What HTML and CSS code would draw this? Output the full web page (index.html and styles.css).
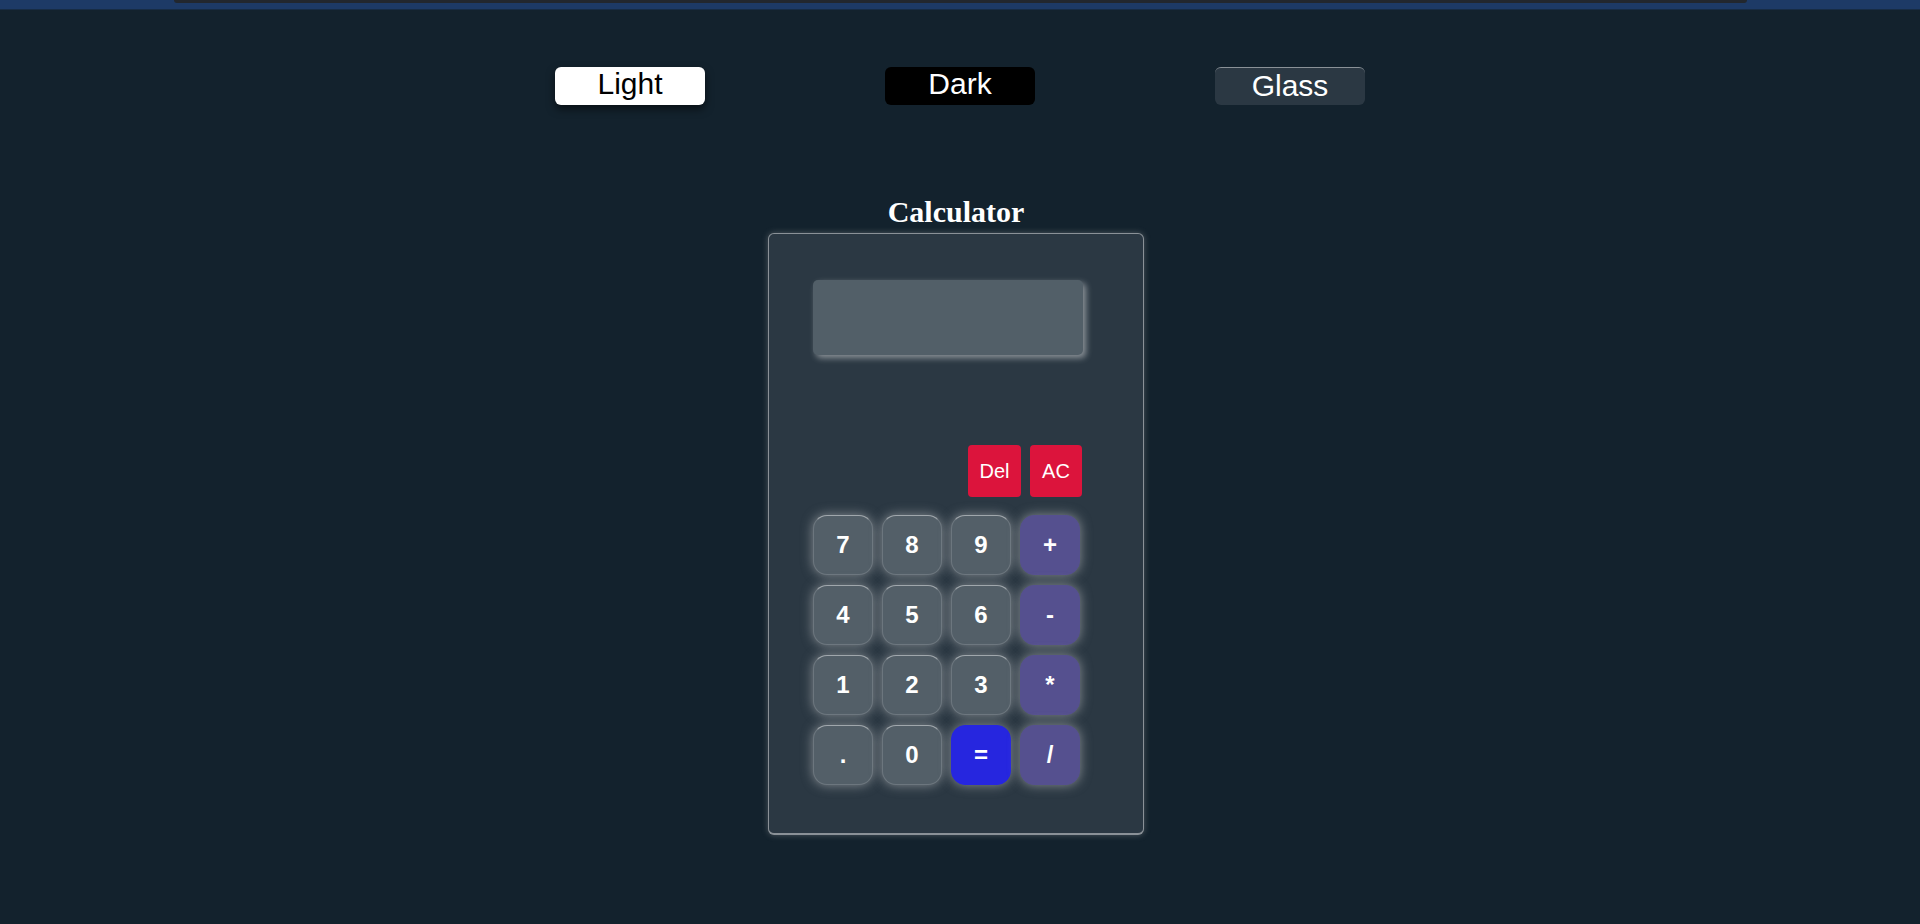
FILE: index.html
```html
<!DOCTYPE html>
<html lang="en">
<head>
<meta charset="utf-8">
<title>Calculator</title>
<link rel="stylesheet" href="styles.css">
</head>
<body>
<div class="topband"><div class="topbar"></div></div>
<div class="themes">
  <button class="theme theme-light">Light</button>
  <button class="theme theme-dark">Dark</button>
  <button class="theme theme-glass">Glass</button>
</div>
<main class="app">
  <h2 class="title">Calculator</h2>
  <div class="calc">
    <div class="display"></div>
    <div class="controls">
      <button class="ctrl">Del</button>
      <button class="ctrl">AC</button>
    </div>
    <div class="keys">
      <button class="key">7</button>
      <button class="key">8</button>
      <button class="key">9</button>
      <button class="key op">+</button>
      <button class="key">4</button>
      <button class="key">5</button>
      <button class="key">6</button>
      <button class="key op">-</button>
      <button class="key">1</button>
      <button class="key">2</button>
      <button class="key">3</button>
      <button class="key op">*</button>
      <button class="key">.</button>
      <button class="key">0</button>
      <button class="key eq">=</button>
      <button class="key op">/</button>
    </div>
  </div>
</main>
</body>
</html>
```
FILE: styles.css
```css
html, body {
  margin: 0;
  padding: 0;
  background: #13222d;
  height: 100%;
}
body {
  font-family: "Liberation Sans", Arial, sans-serif;
  overflow: hidden;
}
.topband {
  height: 9px;
  background: #1d3a66;
  border-bottom: 1px solid #172c45;
  padding: 0 173px 0 174px;
}
.topbar {
  height: 3px;
  background: #22272e;
  border-radius: 0 0 6px 6px;
}
.themes {
  display: flex;
  justify-content: center;
  gap: 180px;
  margin-top: 57px;
}
.theme {
  box-sizing: border-box;
  width: 150px;
  height: 38px;
  border: none;
  border-radius: 6px;
  font-family: "Liberation Sans", Arial, sans-serif;
  font-size: 30px;
  line-height: 34px;
  padding: 0 0 4px;
  cursor: pointer;
}
.theme-light {
  background: #ffffff;
  color: #000;
  box-shadow: 0 4px 8px rgba(0, 0, 0, 0.55);
}
.theme-dark {
  background: #000;
  color: #fff;
}
.theme-glass {
  background: #2b3843;
  color: #fff;
  border-top: 1px solid rgba(255, 255, 255, 0.45);
  padding: 0 0 2px;
}
.app {
  padding-right: 8px;
}
.title {
  margin: 90px 0 4px;
  text-align: center;
  font-family: "Liberation Serif", "Times New Roman", serif;
  font-size: 30px;
  line-height: 34px;
  font-weight: bold;
  color: #fff;
}
.calc {
  box-sizing: border-box;
  width: 376px;
  height: 602px;
  margin: 0 auto;
  background: #2b3843;
  border: 1px solid rgba(255, 255, 255, 0.45);
  border-bottom-width: 2px;
  border-radius: 6px;
  box-shadow: 0 0 6px rgba(190, 190, 190, 0.35);
  padding: 46px 0 0 44px;
}
.display {
  width: 270px;
  height: 75px;
  background: #525f68;
  border-radius: 5px;
  box-shadow: 3px 3px 6px rgba(255, 255, 255, 0.45);
}
.controls {
  display: flex;
  justify-content: flex-end;
  gap: 9px;
  width: 269px;
  margin-top: 90px;
}
.ctrl {
  width: 53px;
  height: 52px;
  border: none;
  border-radius: 4px;
  background: #dc143c;
  color: #fff;
  font-family: "Liberation Sans", Arial, sans-serif;
  font-size: 20px;
  padding: 0;
}
.ctrl + .ctrl {
  width: 52px;
}
.keys {
  display: grid;
  grid-template-columns: repeat(4, 60px);
  grid-auto-rows: 60px;
  column-gap: 9px;
  row-gap: 10px;
  margin-top: 18px;
}
.key {
  box-sizing: border-box;
  border: 1px solid rgba(255, 255, 255, 0.15);
  border-top-color: rgba(255, 255, 255, 0.45);
  border-radius: 14px;
  background: #535f68;
  color: #fff;
  font-family: "Liberation Sans", Arial, sans-serif;
  font-weight: bold;
  font-size: 24px;
  padding: 0;
  box-shadow: 0 0 12px rgba(225, 225, 225, 0.5);
}
.key.op {
  background: #55508f;
  border-color: #55508f;
}
.key.eq {
  background: #2626df;
  border-color: #2626df;
}
```
